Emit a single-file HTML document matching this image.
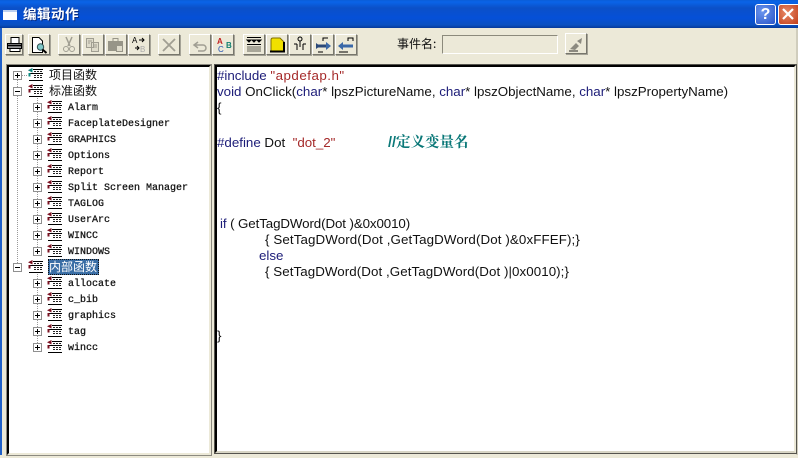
<!DOCTYPE html>
<html><head><meta charset="utf-8">
<style>
html,body{margin:0;padding:0}
body{width:798px;height:458px;overflow:hidden;position:relative;background:#ece9d8;font-family:"Liberation Sans","Noto Sans CJK SC",sans-serif}
div,span,svg{position:absolute;box-sizing:border-box}
#tb{left:0;top:0;width:798px;height:28px;background:linear-gradient(#0a5ed8 0,#0a64e8 2px,#0b50c8 8px,#0550d8 18px,#0a50c0 25px,#07399a 28px)}
#title{left:23px;top:6px;color:#fff;font-size:13.500px;font-weight:bold;line-height:18px;white-space:nowrap;letter-spacing:.5px;text-shadow:1px 1px 0 #0a2c80}
.b{width:22px;height:21px;top:34px;background:#ece9d8;border:1px solid;border-color:#fff #77766c #77766c #fff;box-shadow:1px 1px 0 #a5a397}
.b svg{left:0;top:0}
#left{left:7px;top:65px;width:204px;height:390px;background:#fff;border:2px solid #000;border-right:2px solid #ece9d8;border-bottom:2px solid #ece9d8;outline:1px solid #8c8a80;outline-offset:0}
#right{left:215px;top:65px;width:581px;height:388px;background:#fff;border:2px solid #000;border-right:2px solid #ece9d8;border-bottom:2px solid #d8d5c5;outline:1px solid #55544e}
.t{left:0;white-space:pre;font-size:10px;line-height:14px;font-family:"Liberation Mono",monospace;color:#111;-webkit-text-stroke:.25px #111}
.z{white-space:pre;font-size:12px;line-height:14px;color:#111;font-family:"Noto Sans CJK SC",sans-serif}
.c{white-space:pre;font-size:13.340px;line-height:16px;color:#111}
.k{color:#1c1c78;position:static}.s{color:#a52a2a;position:static}
.x{width:9px;height:9px;background:#fff;border:1px solid #909090}
.x:before{content:"";position:absolute;left:1px;top:3px;width:5px;height:1px;background:#000}
.p:after{content:"";position:absolute;left:3px;top:1px;width:1px;height:5px;background:#000}
.h{height:1px;background:repeating-linear-gradient(90deg,#999 0 1px,transparent 1px 2px)}
.v{width:1px;background:repeating-linear-gradient(#999 0 1px,transparent 1px 2px)}
</style></head>
<body>
<svg width="0" height="0" style="left:0;top:0"><defs>
<g id="ic"><path d="M5 1.500H15M1 5.500H15M1 12.500H15" stroke="#000" fill="none"/>
<path d="M6 3.500h2M9 3.500h2M12 3.500h2M6 7.500h2M9 7.500h2M12 7.500h2M6 9.500h2M9 9.500h2M12 9.500h2" stroke="#222" fill="none"/>
<path d="M1.500 5V8.500" stroke="#7a1020" stroke-width="2" fill="none"/><path d="M4.500 0L0 2.200L4.500 4.500Z" fill="#7a1020"/></g>
<g id="ict"><use href="#ic"/><path d="M4.500 0L0 2.200L4.500 4.500Z" fill="#0a8a80"/><path d="M1.500 5V8.500" stroke="#0a8a80" stroke-width="2" fill="none"/></g>
</defs></svg>

<div id="tb"></div>
<div style="left:3px;top:10px;width:14px;height:10px;background:#fff;border-top:2px solid #bcd0f0"></div>
<div id="title">编辑动作</div>
<div style="left:755px;top:4px;width:21px;height:21px;border-radius:3px;border:1px solid #fff;background:radial-gradient(circle at 35% 35%,#6a95ee,#2a55c8);color:#fff;font-weight:bold;font-size:16px;line-height:19px;text-align:center">?</div>
<div style="left:778px;top:4px;width:20px;height:21px;border-radius:3px 0 0 3px;border:1px solid #fff;border-right:0;background:radial-gradient(circle at 40% 40%,#e88a68,#c03c18)"><svg width="19" height="19"><path d="M4 4L14 14M14 4L4 14" stroke="#fff" stroke-width="2.200"/></svg></div>
<div style="left:0;top:28px;width:2px;height:430px;background:#2060c8"></div>
<div style="left:796px;top:28px;width:2px;height:430px;background:#d0cdbd"></div>
<div style="left:0;top:455px;width:798px;height:3px;background:#ece9d8"></div>

<div class="b" style="left:5px;width:18px"><svg width="18" height="20"><path d="M5 2.500h8v6H5z" fill="#fff" stroke="#000"/><path d="M1.500 8.500h14v5H1.500z" fill="#999" stroke="#000"/><path d="M4 13.500h10v3H4z" fill="#fff" stroke="#000"/><path d="M2 10.500h13" stroke="#000" stroke-width="1.500"/></svg></div>
<div class="b" style="left:28px"><svg width="20" height="20"><path d="M3.500 2.500H10L13.500 6V17.500H3.500z" fill="#fff" stroke="#000"/><circle cx="11.500" cy="12" r="3.200" fill="#7fc8c8" stroke="#305050"/><path d="M13.500 14.500L17.500 18" stroke="#000" stroke-width="2"/></svg></div>
<div class="b" style="left:58px"><svg width="20" height="20"><path d="M7 2L11 11M13 2L9 11" stroke="#a09e92" stroke-width="1.500"/><circle cx="7" cy="14" r="2.500" fill="none" stroke="#a09e92"/><circle cx="13" cy="14" r="2.500" fill="none" stroke="#a09e92"/></svg></div>
<div class="b" style="left:82px"><svg width="20" height="20"><path d="M3.500 3.500h7v9h-7zM8.500 7.500h7v9h-7z" fill="#dedbcb" stroke="#a09e92"/><path d="M5 6h4M5 8h2M10 10h4M10 12h4" stroke="#a09e92"/></svg></div>
<div class="b" style="left:105px"><svg width="20" height="20"><path d="M2 6h15v10H2z" fill="#979588"/><path d="M7 3.500h5v3H7z" fill="none" stroke="#979588"/><path d="M10.500 10.500h6v6h-6z" fill="#dedbcb" stroke="#979588"/></svg></div>
<div class="b" style="left:128px"><svg width="20" height="20"><text x="3" y="8" font-size="8" font-family="Liberation Sans" fill="#000">A</text><text x="11" y="17" font-size="8" font-family="Liberation Sans" fill="#aaa">B</text><path d="M10 5h5M13 3l2 2-2 2M6 13h4M8 11l2 2-2 2" stroke="#000" fill="none"/></svg></div>
<div class="b" style="left:158px"><svg width="20" height="20"><path d="M4 4L16 16M16 4L4 16" stroke="#a09e92" stroke-width="1.800"/></svg></div>
<div class="b" style="left:189px"><svg width="20" height="20"><path d="M5 10h8a3 3 0 0 1 0 6H8M8 7L4 10l4 3" fill="none" stroke="#a09e92" stroke-width="1.500"/></svg></div>
<div class="b" style="left:212px"><svg width="20" height="20"><text x="4" y="9" font-size="8" font-weight="bold" font-family="Liberation Sans" fill="#c02020">A</text><text x="5" y="17" font-size="8" font-family="Liberation Sans" fill="#2050b0">C</text><text x="13" y="13" font-size="8" font-weight="bold" font-family="Liberation Sans" fill="#108070">B</text></svg></div>
<div class="b" style="left:243px"><svg width="20" height="20"><path d="M3 2.500h14M3 5h4l-2 2zM8 5h4l-2 2zM13 5h4l-2 2z" stroke="#000" fill="#000"/><path d="M3 11h14v6H3z" fill="#a8a698"/><path d="M3 9.500h14" stroke="#000"/></svg></div>
<div class="b" style="left:266px"><svg width="20" height="20"><path d="M4 5Q4 3 6 3H13L17 7V16H4z" fill="#f0e000" stroke="#807000"/><path d="M3 16.500h15" stroke="#000" stroke-width="2"/><path d="M17 7V16" stroke="#000" stroke-width="2"/></svg></div>
<div class="b" style="left:289px"><svg width="20" height="20"><circle cx="10" cy="4" r="2" fill="none" stroke="#000"/><path d="M10 6V12M4 9H7M13 9H16M7 9V15M13 9V15" stroke="#000" fill="none"/></svg></div>
<div class="b" style="left:312px"><svg width="20" height="20"><path d="M3 11H14" stroke="#2a4878" stroke-width="3"/><path d="M13 7l5 4-5 4z" fill="#3a68a8"/><path d="M3 8l4 3-4 3z" fill="#2a4878"/><path d="M10 6V3h5M5 17h5" stroke="#000" fill="none"/></svg></div>
<div class="b" style="left:335px"><svg width="20" height="20"><path d="M6 11H17" stroke="#3a68a8" stroke-width="3"/><path d="M7 7L2 11l5 4z" fill="#3a68a8"/><path d="M12 6V3h5v3M3 17h9" stroke="#000" fill="none"/></svg></div>

<div class="z" style="left:397px;top:37px;font-size:12px">事件名:</div>
<div style="left:442px;top:35px;width:116px;height:19px;border:1px solid;border-color:#8c8a7c #fff #fff #8c8a7c;background:#ece9d8"></div>
<div class="b" style="left:565px;top:33px"><svg width="20" height="20"><path d="M4 15L10 9l3 3-4 4zM11 7l5-3-1 6z" fill="#8c8a80"/><path d="M3 17h9" stroke="#8c8a80" stroke-width="2"/></svg></div>

<div id="left"></div>
<div id="right"></div>

<div class="v" style="left:17px;top:80px;height:187px"></div>
<div class="v" style="left:37px;top:96px;height:155px"></div>
<div class="v" style="left:37px;top:272px;height:75px"></div>

<div class="h" style="left:22px;top:75px;width:6px"></div>
<div class="x p" style="left:13px;top:71px"></div><svg width="16" height="15" style="left:28px;top:68px"><use href="#ict"/></svg><div class="z" style="left:49px;top:68px">项目函数</div>
<div class="x" style="left:13px;top:87px"></div><svg width="16" height="15" style="left:28px;top:84px"><use href="#ic"/></svg><div class="z" style="left:49px;top:84px">标准函数</div>

<div class="x p" style="left:33px;top:103px"></div><svg width="16" height="15" style="left:47px;top:100px"><use href="#ic"/></svg><div class="t" style="left:68px;top:102px">Alarm</div>
<div class="x p" style="left:33px;top:119px"></div><svg width="16" height="15" style="left:47px;top:116px"><use href="#ic"/></svg><div class="t" style="left:68px;top:118px">FaceplateDesigner</div>
<div class="x p" style="left:33px;top:135px"></div><svg width="16" height="15" style="left:47px;top:132px"><use href="#ic"/></svg><div class="t" style="left:68px;top:134px">GRAPHICS</div>
<div class="x p" style="left:33px;top:151px"></div><svg width="16" height="15" style="left:47px;top:148px"><use href="#ic"/></svg><div class="t" style="left:68px;top:150px">Options</div>
<div class="x p" style="left:33px;top:167px"></div><svg width="16" height="15" style="left:47px;top:164px"><use href="#ic"/></svg><div class="t" style="left:68px;top:166px">Report</div>
<div class="x p" style="left:33px;top:183px"></div><svg width="16" height="15" style="left:47px;top:180px"><use href="#ic"/></svg><div class="t" style="left:68px;top:182px">Split Screen Manager</div>
<div class="x p" style="left:33px;top:199px"></div><svg width="16" height="15" style="left:47px;top:196px"><use href="#ic"/></svg><div class="t" style="left:68px;top:198px">TAGLOG</div>
<div class="x p" style="left:33px;top:215px"></div><svg width="16" height="15" style="left:47px;top:212px"><use href="#ic"/></svg><div class="t" style="left:68px;top:214px">UserArc</div>
<div class="x p" style="left:33px;top:231px"></div><svg width="16" height="15" style="left:47px;top:228px"><use href="#ic"/></svg><div class="t" style="left:68px;top:230px">WINCC</div>
<div class="x p" style="left:33px;top:247px"></div><svg width="16" height="15" style="left:47px;top:244px"><use href="#ic"/></svg><div class="t" style="left:68px;top:246px">WINDOWS</div>

<div class="x" style="left:13px;top:263px"></div><svg width="16" height="15" style="left:28px;top:260px"><use href="#ic"/></svg>
<div style="left:48px;top:259px;width:51px;height:16px;background:#3a6ea5;outline:1px dotted #111;outline-offset:-1px"></div>
<div class="z" style="left:49px;top:260px;color:#fff">内部函数</div>

<div class="x p" style="left:33px;top:279px"></div><svg width="16" height="15" style="left:47px;top:276px"><use href="#ic"/></svg><div class="t" style="left:68px;top:278px">allocate</div>
<div class="x p" style="left:33px;top:295px"></div><svg width="16" height="15" style="left:47px;top:292px"><use href="#ic"/></svg><div class="t" style="left:68px;top:294px">c_bib</div>
<div class="x p" style="left:33px;top:311px"></div><svg width="16" height="15" style="left:47px;top:308px"><use href="#ic"/></svg><div class="t" style="left:68px;top:310px">graphics</div>
<div class="x p" style="left:33px;top:327px"></div><svg width="16" height="15" style="left:47px;top:324px"><use href="#ic"/></svg><div class="t" style="left:68px;top:326px">tag</div>
<div class="x p" style="left:33px;top:343px"></div><svg width="16" height="15" style="left:47px;top:340px"><use href="#ic"/></svg><div class="t" style="left:68px;top:342px">wincc</div>

<div class="c" style="left:217px;top:68px"><span class="k">#include</span> <span class="s" style="letter-spacing:.5px">"apdefap.h"</span></div>
<div class="c" style="left:217px;top:84px"><span class="k">void</span> OnClick(<span class="k">char</span>* lpszPictureName, <span class="k">char</span>* lpszObjectName, <span class="k">char</span>* lpszPropertyName)</div>
<div class="c" style="left:217px;top:100px">{</div>
<div class="c" style="left:217px;top:135px"><span class="k">#define</span> Dot  <span class="s">"dot_2"</span></div>
<div class="c" style="left:388px;top:135px;color:#0a7878;font-weight:bold;font-family:'Liberation Sans','Noto Serif CJK SC',serif;font-size:14.500px">//定义变量名</div>
<div class="c" style="left:220px;top:216px;letter-spacing:-.1px"><span class="k">if</span> ( GetTagDWord(Dot )&amp;0x0010)</div>
<div class="c" style="left:265px;top:232px;letter-spacing:.11px">{ SetTagDWord(Dot ,GetTagDWord(Dot )&amp;0xFFEF);}</div>
<div class="c k" style="position:absolute;left:259px;top:248px">else</div>
<div class="c" style="left:265px;top:264px;letter-spacing:.07px">{ SetTagDWord(Dot ,GetTagDWord(Dot )|0x0010);}</div>
<div class="c" style="left:217px;top:328px">}</div>
</body></html>
